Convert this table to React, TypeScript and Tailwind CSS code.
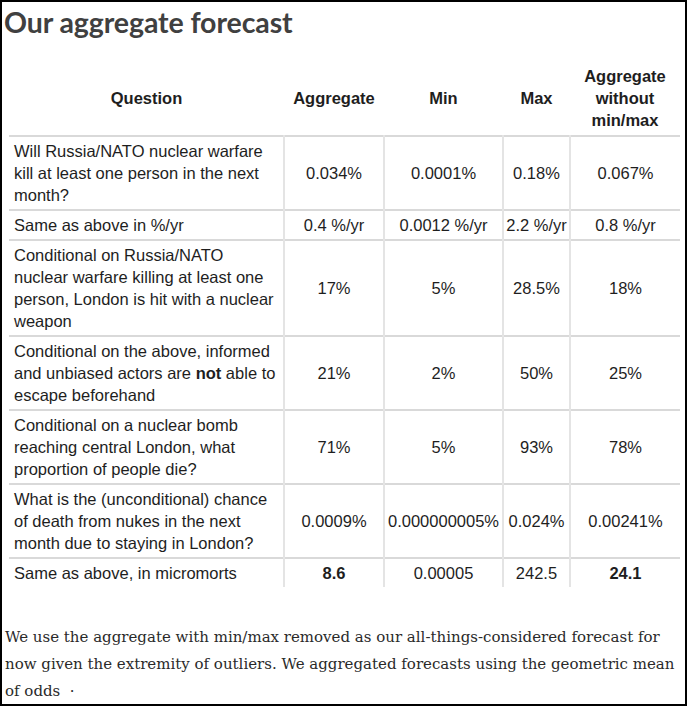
import type { ReactNode } from 'react';

type Row = {
  question: ReactNode;
  aggregate: ReactNode;
  min: string;
  max: string;
  trimmed: ReactNode;
};

const ROWS: Row[] = [
  {
    question: 'Will Russia/NATO nuclear warfare kill at least one person in the next month?',
    aggregate: '0.034%',
    min: '0.0001%',
    max: '0.18%',
    trimmed: '0.067%',
  },
  {
    question: 'Same as above in %/yr',
    aggregate: '0.4 %/yr',
    min: '0.0012 %/yr',
    max: '2.2 %/yr',
    trimmed: '0.8 %/yr',
  },
  {
    question:
      'Conditional on Russia/NATO nuclear warfare killing at least one person, London is hit with a nuclear weapon',
    aggregate: '17%',
    min: '5%',
    max: '28.5%',
    trimmed: '18%',
  },
  {
    question: (
      <>
        Conditional on the above, informed and unbiased actors are <strong>not</strong> able to
        escape beforehand
      </>
    ),
    aggregate: '21%',
    min: '2%',
    max: '50%',
    trimmed: '25%',
  },
  {
    question: 'Conditional on a nuclear bomb reaching central London, what proportion of people die?',
    aggregate: '71%',
    min: '5%',
    max: '93%',
    trimmed: '78%',
  },
  {
    question:
      'What is the (unconditional) chance of death from nukes in the next month due to staying in London?',
    aggregate: '0.0009%',
    min: '0.000000005%',
    max: '0.024%',
    trimmed: '0.00241%',
  },
  {
    question: 'Same as above, in micromorts',
    aggregate: <strong>8.6</strong>,
    min: '0.00005',
    max: '242.5',
    trimmed: <strong>24.1</strong>,
  },
];

const cell = 'border-l-2 border-[#e4e4e4] px-[2px] py-[3px] text-center align-middle';
const head = 'px-[2px] py-[4px] text-center align-middle font-bold';

export default function App() {
  return (
    <div className="h-[706px] w-[687px] overflow-hidden border-2 border-black bg-white">
      <h2 className="mt-[3px] pl-[2px] font-['Lato',sans-serif] text-[28.5px] leading-[34px] font-bold tracking-[-0.1px] text-[#404040]">
        Our aggregate forecast
      </h2>

      <table className="mt-[22px] ml-[7px] w-[671px] table-fixed border-collapse font-['Liberation_Sans',Arial,sans-serif] text-[16.5px] leading-[22px] text-[#1e1e1e]">
        <colgroup>
          <col className="w-[275px]" />
          <col className="w-[100px]" />
          <col className="w-[119px]" />
          <col className="w-[67px]" />
          <col className="w-[110px]" />
        </colgroup>
        <thead>
          <tr className="border-b-2 border-[#d9d9d9]">
            <th className={head}>Question</th>
            <th className={head}>Aggregate</th>
            <th className={head}>Min</th>
            <th className={head}>Max</th>
            <th className={head}>Aggregate without min/max</th>
          </tr>
        </thead>
        <tbody>
          {ROWS.map((row, i) => (
            <tr
              key={i}
              className={i < ROWS.length - 1 ? 'border-b-2 border-[#d9d9d9]' : undefined}
            >
              <td className="py-[3px] pr-[4px] pl-[5px] text-left align-middle">{row.question}</td>
              <td className={cell}>{row.aggregate}</td>
              <td className={cell}>{row.min}</td>
              <td className={cell}>{row.max}</td>
              <td className={cell}>{row.trimmed}</td>
            </tr>
          ))}
        </tbody>
      </table>

      <p className="mt-[37px] pl-[3px] font-['DejaVu_Serif',serif] text-[15px] leading-[27px] text-[#2a2a2a]">
        We use the aggregate with min/max removed as our all-things-considered forecast for now given
        the extremity of outliers. We aggregated forecasts using the geometric mean of odds{'\u00a0\u00a0·'}
      </p>
    </div>
  );
}
